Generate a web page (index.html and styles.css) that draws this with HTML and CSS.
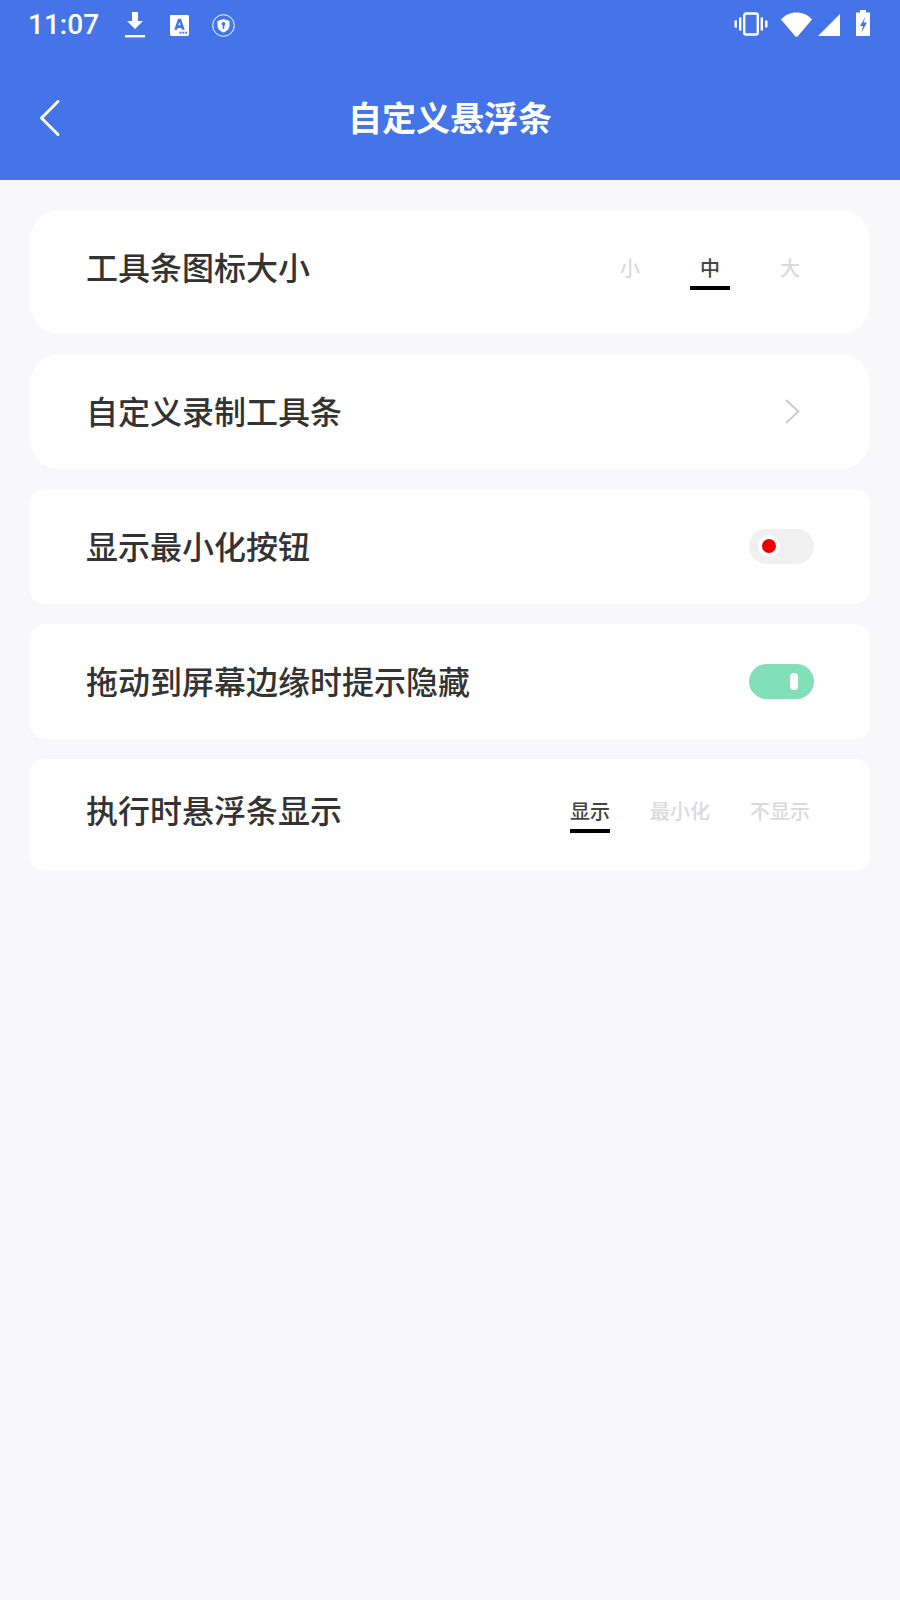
FILE: index.html
```html
<!DOCTYPE html>
<html lang="zh-CN">
<head>
    <meta charset="UTF-8">
    <meta name="viewport" content="width=device-width, initial-scale=1.0">
    <title>自定义悬浮条</title>
    <link rel="stylesheet" href="styles.css">
</head>
<body>

<div class="header">
    <div class="status-bar">
        <span class="time">11:07</span>
        <svg class="st-icon download" width="20" height="28" viewBox="0 0 20 28">
            <path d="M7 1h6v9h5l-8 8-8-8h5z" fill="#fff"/>
            <rect y="24" width="20" height="2.4" fill="#fff"/>
        </svg>
        <svg class="st-icon font-app" width="19" height="21" viewBox="0 0 20 22">
            <path d="M1.500 0h17A1.500 1.500 0 0 1 20 1.500v19a1.500 1.500 0 0 1-1.500 1.500h-17A1.500 1.500 0 0 1 0 20.500v-19A1.500 1.500 0 0 1 1.500 0z" fill="#fff"/>
            <path d="M4.500 15.500L8.500 4h3l4 11.500h-3l-.6-2H8.100l-.6 2zM8.900 10.800h2.200L10 7z" fill="#4474e8" fill-rule="evenodd"/>
            <rect x="10" y="17.500" width="2" height="2" fill="#4474e8"/>
            <rect x="13" y="17.500" width="2" height="2" fill="#4474e8"/>
            <rect x="16" y="17.500" width="2" height="2" fill="#4474e8"/>
        </svg>
        <svg class="st-icon shield" width="23" height="23" viewBox="0 0 23 23">
            <circle cx="11.500" cy="11.500" r="10.800" fill="none" stroke="#fff" stroke-width="1"/>
            <path d="M11.500 5l6 2v4.500c0 3.500-2.500 5.500-6 7-3.500-1.500-6-3.500-6-7V7z" fill="#fff"/>
            <circle cx="11.500" cy="9.800" r="1.900" fill="#4474e8"/>
            <rect x="10.700" y="10.500" width="1.600" height="4.500" fill="#4474e8"/>
        </svg>
        <div class="status-right">
            <svg class="vibrate" width="34" height="24" viewBox="0 0 34 24">
                <rect x="10.200" y="1.500" width="13.600" height="21" rx="2" fill="none" stroke="#fff" stroke-width="2.400"/>
                <rect x="5" y="5.500" width="2.400" height="13" fill="#fff"/>
                <rect x="26.600" y="5.500" width="2.400" height="13" fill="#fff"/>
                <rect x="0.500" y="8.500" width="2.400" height="7" fill="#fff"/>
                <rect x="31.100" y="8.500" width="2.400" height="7" fill="#fff"/>
            </svg>
            <svg class="wifi" width="31" height="25" viewBox="0 0 31 25">
                <path d="M0 7.500C4 3 9.500 .5 15.500 .5S27 3 31 7.500L17 24a2 2 0 0 1-3 0z" fill="#fff"/>
            </svg>
            <svg class="signal" width="22" height="22" viewBox="0 0 22 22">
                <path d="M22 0v22H0z" fill="#fff"/>
            </svg>
            <svg class="battery" width="14" height="26" viewBox="0 0 14 26">
                <path d="M4 0h6v2.500h4V26H0V2.500h4z" fill="#fff"/>
                <path d="M9.500 6.500L4 16h3l-1.500 6.500L11 12.500H7.500z" fill="#4474e8"/>
            </svg>
        </div>
    </div>
    <div class="nav-bar">
        <svg class="back" width="24" height="40" viewBox="0 0 24 40">
            <path d="M20 3.500L3.500 20 20 36.500" fill="none" stroke="#fff" stroke-width="3" stroke-linecap="round" stroke-linejoin="round"/>
        </svg>
        <div class="nav-title">自定义悬浮条</div>
    </div>
</div>

<div class="list">
    <div class="card card-size">
        <div class="label">工具条图标大小</div>
        <div class="options">
            <div class="opt">小</div>
            <div class="opt active">中</div>
            <div class="opt">大</div>
        </div>
    </div>

    <div class="card card-link">
        <div class="label">自定义录制工具条</div>
        <svg class="chevron" width="16" height="25" viewBox="0 0 16 25">
            <path d="M2 1L14.500 12.500 2 24" fill="none" stroke="#c8c8cc" stroke-width="1.800"/>
        </svg>
    </div>

    <div class="card card-row">
        <div class="label">显示最小化按钮</div>
        <div class="toggle off"><span class="dot"></span></div>
    </div>

    <div class="card card-row">
        <div class="label">拖动到屏幕边缘时提示隐藏</div>
        <div class="toggle on"><span class="pill"></span></div>
    </div>

    <div class="card card-mode">
        <div class="label">执行时悬浮条显示</div>
        <div class="options">
            <div class="opt active">显示</div>
            <div class="opt">最小化</div>
            <div class="opt">不显示</div>
        </div>
    </div>
</div>

</body>
</html>
```

FILE: styles.css
```css
body {
    margin: 0;
    min-height: 1600px;
    background-color: #f8f8fa;
    font-family: "Noto Sans CJK SC", "Noto Sans", sans-serif;
}
.header {
    height: 180px;
    background-color: #4474e8;
    color: #fff;
}
.status-bar {
    height: 50px;
    display: flex;
    align-items: center;
    padding: 0 30px 0 28px;
}
.time {
    font-family: Roboto, sans-serif;
    font-size: 28px;
    font-weight: 500;
    line-height: 50px;
    width: 97px;
}
.st-icon {
    display: block;
}
.font-app {
    margin-left: 25px;
}
.shield {
    margin-left: 23px;
}
.status-right {
    margin-left: auto;
    display: flex;
    align-items: center;
}
.vibrate {
    margin-bottom: 2px;
}
.wifi {
    margin-left: 13px;
    margin-bottom: 2px;
}
.signal {
    margin-left: 6px;
}
.battery {
    margin-left: 16px;
    margin-bottom: 4px;
}
.nav-bar {
    height: 130px;
    display: flex;
    align-items: center;
    justify-content: center;
    position: relative;
}
.back {
    position: absolute;
    left: 38px;
    top: 48px;
}
.nav-title {
    font-size: 34px;
    font-weight: 700;
    margin-top: 2px;
}
.list {
    padding: 30px 30px 0;
    display: flex;
    flex-direction: column;
    gap: 20px;
}
.card {
    background-color: #fff;
    border-radius: 15px;
    display: flex;
    align-items: center;
    justify-content: space-between;
    padding: 0 60px 0 56px;
}
.card-size {
    height: 124px;
    border-radius: 30px;
    padding-bottom: 8px;
    box-sizing: border-box;
}
.card-link {
    height: 115px;
    border-radius: 30px;
    padding-right: 70px;
}
.card-row {
    height: 115px;
    padding-right: 56px;
}
.card-mode {
    height: 112px;
    padding-bottom: 8px;
    box-sizing: border-box;
}
.label {
    font-size: 32px;
    font-weight: 500;
    color: #333;
    line-height: 44px;
    margin-top: -4px;
}
.options {
    display: flex;
    gap: 40px;
}
.opt {
    min-width: 40px;
    text-align: center;
    font-size: 20px;
    font-weight: 500;
    line-height: 28px;
    color: #dadade;
    padding-bottom: 4px;
    border-bottom: 4px solid transparent;
    margin-top: 8px;
}
.opt.active {
    color: #444;
    border-bottom-color: #000;
}
.toggle {
    width: 65px;
    height: 35px;
    border-radius: 18px;
    position: relative;
}
.toggle.off {
    background-color: #f0f0f1;
}
.toggle.on {
    background-color: #83dfb8;
}
.dot {
    position: absolute;
    left: 9px;
    top: 6px;
    width: 14px;
    height: 14px;
    border-radius: 50%;
    background-color: #ef0000;
    border: 4px solid #fff;
}
.pill {
    position: absolute;
    left: 41px;
    top: 9px;
    width: 8px;
    height: 17px;
    border-radius: 4px;
    background-color: #fff;
}
```
